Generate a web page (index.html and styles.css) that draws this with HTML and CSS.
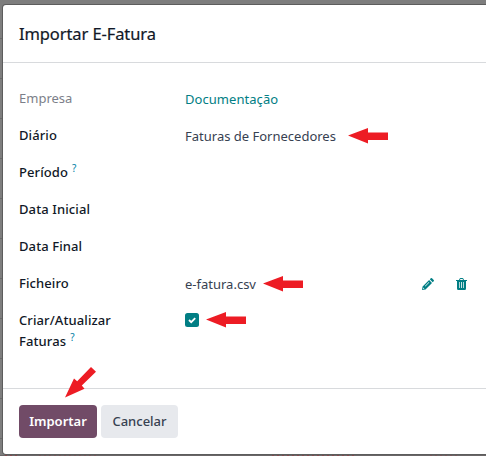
FILE: index.html
```html
<!DOCTYPE html>
<html lang="pt">
<head>
<meta charset="utf-8">
<title>Importar E-Fatura</title>
<link rel="stylesheet" href="styles.css">
</head>
<body>
<div class="backdrop-text"><i class="m1"></i><i class="m2"></i><i class="m3"></i><i class="m4"></i></div>
<main class="modal">
  <header class="modal-header"><h1>Importar E-Fatura</h1></header>
  <section class="form">
    <div class="row"><span class="label muted">Empresa</span><span class="value link"><span class="company">Documentação</span></span></div>
    <div class="row"><span class="label journal">Diário</span><span class="value"><span class="journal-value">Faturas de Fornecedores</span>
      <svg class="arrow arrow-journal" viewBox="0 0 40 16"><path d="M0 7.5 20 0V4.5H40V12H20V15.5Z"/></svg></span></div>
    <div class="row"><span class="label period">Período<sup>?</sup></span></div>
    <div class="row"><span class="label start">Data Inicial</span></div>
    <div class="row"><span class="label end">Data Final</span></div>
    <div class="row"><span class="label file">Ficheiro</span><span class="value"><span class="file-value">e-fatura.csv</span>
      <svg class="arrow arrow-file" viewBox="0 0 40 16"><path d="M0 7.5 20 0V4.5H40V12H20V15.5Z"/></svg></span>
      <span class="actions">
        <svg class="pencil" viewBox="0 0 12 12"><path fill-rule="evenodd" d="M0 12 .6 8.5 7.1 2 10 4.9 3.5 11.4ZM1.3 9.6 1.1 10.9 2.4 10.7ZM3 8 3.4 8.4 7.3 4.5 6.9 4.1ZM7.8 1.3 8.8.3Q9.4-.3 10 .3L11.7 2Q12.3 2.6 11.7 3.2L10.7 4.2Z"/></svg>
        <svg class="trash" viewBox="0 0 11 12"><path fill-rule="evenodd" d="M0 2H3L3.7.5Q4 0 4.5 0H6.5Q7 0 7.3.5L8 2H11V3H10V10.5Q10 12 8.7 12H2.3Q1 12 1 10.5V3H0ZM4 2H7L6.6 1H4.4ZM3 4V10H3.7V4ZM5.1 4V10H5.9V4ZM7.3 4V10H8V4Z"/></svg>
      </span></div>
    <div class="row tall"><span class="label create"><span>Criar/Atualizar</span><br><span class="invoices">Faturas</span><sup>?</sup></span><span class="value check-value">
      <svg class="check" viewBox="0 0 14 14"><rect width="14" height="14" rx="2.5"/><path d="M4 7 6.2 9.2 10.2 5.1"/></svg>
      <svg class="arrow arrow-check" viewBox="0 0 40 16"><path d="M0 7.5 20 0V4.5H40V12H20V15.5Z"/></svg></span></div>
  </section>
  <footer class="modal-footer">
    <button class="primary"><span>Importar</span></button><button class="secondary"><span>Cancelar</span></button>
    <svg class="pointer" viewBox="0 0 32 32"><path d="M0 30.5 9 11.5 12.2 14.3 26 0 31 4.8 16.8 18.6 19.5 21.8Z"/></svg>
  </footer>
</main>
</body>
</html>
```
FILE: styles.css
```css
* { box-sizing: border-box; }
body {
  margin: 0;
  width: 486px;
  height: 456px;
  overflow: hidden;
  padding: 5px 0 0 3px;
  background: repeating-linear-gradient(#7e7e7e 0 38px, #6a6a6a 38px 39px, #7e7e7e 39px 40px);
  font: 14px/21px "Noto Sans", "Open Sans", sans-serif;
  color: #111827;
}
.modal {
  position: relative;
  width: 500px;
  height: 449px;
  background: #fff;
  border-radius: 3px 0 0 3px;
  box-shadow: 0 0 0 1px #5d5d5d;
}
.modal-header {
  height: 58px;
  padding: 16px;
  border-bottom: 1px solid #d8dadd;
}
h1 { margin: 0; font-size: 16.5px; line-height: 26px; font-weight: 400; letter-spacing: -.1px; white-space: nowrap; -webkit-text-stroke: .2px #111827; }
.form { height: 325px; padding: 21px 16px 0; }
.row { display: flex; height: 37px; padding-top: 4px; white-space: nowrap; }
.label { width: 166px; flex: none; font-size: 13px; line-height: 21px; font-weight: 500; letter-spacing: .1px; }
.muted { color: #7c7f89; letter-spacing: 0; font-weight: 400; }
.value { display: flex; width: 220px; padding-top: 1px; font-size: 13px; color: #374151; }
.link { color: #017e84; letter-spacing: .05px; }
sup { font-size: 10px; line-height: 0; font-weight: 400; color: #0180a5; margin-left: 4px; vertical-align: 5px; }
.arrow { width: 40px; height: 16px; fill: #ed1c24; flex: none; }
.arrow-journal { margin: 2px 0 0 12px; }
.arrow-file { margin: 2px 0 0 7px; }
.arrow-check { margin: 2px 0 0 7px; }
.actions { display: flex; gap: 22px; padding: 5px 0 0 17px; fill: #017e84; }
.pencil { width: 12px; height: 12px; }
.trash { width: 11px; height: 12px; }
.check { width: 14px; height: 14px; margin-top: 3px; fill: #017e84; flex: none; }
.check path { fill: none; stroke: #fff; stroke-width: 1.8; }
.check-value { padding-top: 0; }
.modal-footer {
  position: relative;
  display: flex;
  gap: 4px;
  height: 66px;
  padding: 16px;
  border-top: 1px solid #d8dadd;
}
button {
  height: 33px;
  padding: 0;
  border: 0;
  border-radius: 4px;
  font: 500 13px/33px "Noto Sans", sans-serif;
  white-space: nowrap;
}
.primary { width: 78px; color: #fff; background: #714b67; font-weight: 600; }
.secondary { width: 77px; color: #374151; background: #e7e9ed; }
.pointer { position: absolute; left: 62px; top: -22px; width: 32px; height: 32px; fill: #ed1c24; }
.backdrop-text { position: absolute; inset: 455px 0 0 0; display: flex; background: #6a6667; }
.backdrop-text i { height: 1px; background: repeating-linear-gradient(90deg, #84494d 0 2px, #6a6667 2px 5px); }
.m1 { width: 14px; margin-left: 5px; }
.m2 { width: 60px; margin-left: 20px; opacity: .5; }
.m3 { width: 82px; margin-left: 173px; }
.m4 { width: 28px; margin-left: 76px; opacity: .5; }
```
